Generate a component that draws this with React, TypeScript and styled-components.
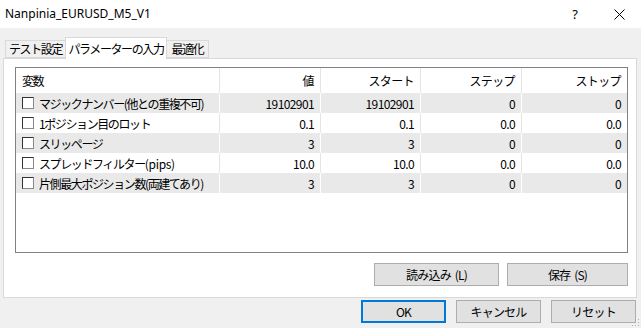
import React from "react";
import styled, { createGlobalStyle } from "styled-components";

const Global = createGlobalStyle`
  html, body { margin: 0; padding: 0; background: #f0f0f0; }
  body { font-family: "Noto Sans CJK JP", "Noto Sans", sans-serif; font-size: 12px; color: #000; }
`;

const Window = styled.div`
  position: relative;
  width: 641px;
  height: 328px;
  background: #f0f0f0;
  display: flex;
  flex-direction: column;
  overflow: hidden;
`;

const TitleBar = styled.div`
  height: 28px;
  background: #fff;
  display: flex;
  align-items: center;
  padding-left: 5px;
  box-sizing: border-box;
  font-family: "Noto Sans", "Noto Sans CJK JP", sans-serif;
  font-size: 12px;
`;

const TitleText = styled.div`
  flex: 1;
  line-height: 28px;
`;

const TitleButton = styled.div`
  width: 44px;
  height: 28px;
  display: flex;
  align-items: center;
  justify-content: center;
  font-size: 13px;
`;

const Body = styled.div`
  flex: 1;
  display: flex;
  flex-direction: column;
  padding: 9px 5px 0 3px;
`;

const TabStrip = styled.div`
  display: flex;
  align-items: flex-end;
  height: 21px;
  padding-left: 2px;
  position: relative;
  z-index: 1;
`;

const Tab = styled.div<{ $active?: boolean; $w: number }>`
  box-sizing: border-box;
  width: ${(p) => p.$w}px;
  height: ${(p) => (p.$active ? "22px" : "18px")};
  margin-bottom: ${(p) => (p.$active ? "-1px" : "0")};
  border: 1px solid #d9d9d9;
  border-bottom: ${(p) => (p.$active ? "none" : "1px solid #d9d9d9")};
  background: ${(p) => (p.$active ? "#fff" : "#f0f0f0")};
  margin-left: ${(p) => (p.$active ? "-1px" : "0")};
  margin-right: ${(p) => (p.$active ? "-1px" : "0")};
  display: flex;
  align-items: center;
  justify-content: center;
  font-size: 12px;
  letter-spacing: -1.4px;
  line-height: 1;
  white-space: nowrap;
`;

const Panel = styled.div`
  box-sizing: border-box;
  width: 634px;
  height: 240px;
  background: #fff;
  border: 1px solid #d9d9d9;
  padding: 8px 8px 0 11px;
  display: flex;
  flex-direction: column;
`;

const Table = styled.div`
  box-sizing: border-box;
  height: 186px;
  border: 1px solid #828282;
  display: flex;
  flex-direction: column;
`;

const Row = styled.div<{ $shade?: boolean; $header?: boolean }>`
  display: grid;
  grid-template-columns: 204px 101px 100px 101px 1fr;
  height: ${(p) => (p.$header ? "25px" : "20px")};
  background: ${(p) => (p.$shade ? "#e9e9e9" : "#fff")};
`;

const Cell = styled.div<{ $left?: boolean; $sep: string; $last?: boolean }>`
  display: flex;
  align-items: center;
  justify-content: ${(p) => (p.$left ? "flex-start" : "flex-end")};
  padding: ${(p) => (p.$left ? "0 0 0 6px" : "0 6px 0 0")};
  border-right: ${(p) => (p.$last ? "none" : `1px solid ${p.$sep}`)};
  white-space: nowrap;
  overflow: hidden;
  font-size: 12px;
  letter-spacing: ${(p) => (p.$left ? "-1.4px" : "-0.6px")};
`;

const Latin = styled.span`
  letter-spacing: -0.3px;
`;

const Check = styled.span`
  box-sizing: border-box;
  width: 12px;
  height: 12px;
  border-top: 1px solid #333;
  border-left: 1px solid #333;
  border-right: 1px solid #8a8a8a;
  border-bottom: 1px solid #8a8a8a;
  background: #fff;
  margin-right: 5px;
  flex-shrink: 0;
`;

const PanelButtons = styled.div`
  display: flex;
  justify-content: flex-end;
  gap: 8px;
  margin-top: 10px;
`;

const Button = styled.div<{ $w: number; $default?: boolean }>`
  box-sizing: border-box;
  width: ${(p) => p.$w}px;
  height: 23px;
  background: #e1e1e1;
  border: ${(p) => (p.$default ? "2px solid #0078d7" : "1px solid #adadad")};
  display: flex;
  align-items: center;
  justify-content: center;
  font-size: 12px;
  letter-spacing: -0.8px;
  word-spacing: 2px;
  white-space: pre;
`;

const BottomButtons = styled.div`
  display: flex;
  justify-content: flex-end;
  gap: 10px;
  margin-top: 2px;
`;

const Grip = styled.svg`
  position: absolute;
  right: 1px;
  bottom: 1px;
`;

const headers = ["変数", "値", "スタート", "ステップ", "ストップ"];
const rows: [string, string, string, string, string, string?][] = [
  ["マジックナンバー(他との重複不可)", "19102901", "19102901", "0", "0"],
  ["1ポジション目のロット", "0.1", "0.1", "0.0", "0.0"],
  ["スリッページ", "3", "3", "0", "0"],
  ["スプレッドフィルター", "10.0", "10.0", "0.0", "0.0", "(pips)"],
  ["片側最大ポジション数(両建てあり)", "3", "3", "0", "0"],
];

export default function App() {
  return (
    <Window>
      <Global />
      <TitleBar>
        <TitleText>Nanpinia_EURUSD_M5_V1</TitleText>
        <TitleButton>?</TitleButton>
        <TitleButton>
          <svg width="11" height="11" viewBox="0 0 11 11">
            <path d="M0.5 0.5 L10.5 10.5 M10.5 0.5 L0.5 10.5" stroke="#000" strokeWidth="1" fill="none" />
          </svg>
        </TitleButton>
      </TitleBar>
      <Body>
        <TabStrip>
          <Tab $w={61}>テスト設定</Tab>
          <Tab $w={102} $active>パラメーターの入力</Tab>
          <Tab $w={43}>最適化</Tab>
        </TabStrip>
        <Panel>
          <Table>
            <Row $header>
              {headers.map((h, i) => (
                <Cell key={i} $left={i === 0} $sep="#e5e5e5" $last={i === 4}>
                  {h}
                </Cell>
              ))}
            </Row>
            {rows.map((r, ri) => (
              <Row key={ri} $shade={ri % 2 === 0}>
                {r.slice(0, 5).map((c, ci) => (
                  <Cell
                    key={ci}
                    $left={ci === 0}
                    $sep={ri % 2 === 0 ? "#ffffff" : "#e5e5e5"}
                    $last={ci === 4}
                  >
                    {ci === 0 && <Check />}
                    {c}
                    {ci === 0 && r[5] && <Latin>{r[5]}</Latin>}
                  </Cell>
                ))}
              </Row>
            ))}
          </Table>
          <PanelButtons>
            <Button $w={125}>読み込み (L)</Button>
            <Button $w={121}>保存 (S)</Button>
          </PanelButtons>
        </Panel>
        <BottomButtons>
          <Button $w={85} $default>OK</Button>
          <Button $w={85}>キャンセル</Button>
          <Button $w={85}>リセット</Button>
        </BottomButtons>
      </Body>
      <Grip width="8" height="8" viewBox="0 0 8 8">
        <rect x="6" y="0" width="1" height="1" fill="#b0b0b0" />
        <rect x="3" y="3" width="1" height="1" fill="#b0b0b0" />
        <rect x="6" y="3" width="1" height="1" fill="#b0b0b0" />
        <rect x="0" y="6" width="1" height="1" fill="#b0b0b0" />
        <rect x="3" y="6" width="1" height="1" fill="#b0b0b0" />
        <rect x="6" y="6" width="1" height="1" fill="#b0b0b0" />
      </Grip>
    </Window>
  );
}
